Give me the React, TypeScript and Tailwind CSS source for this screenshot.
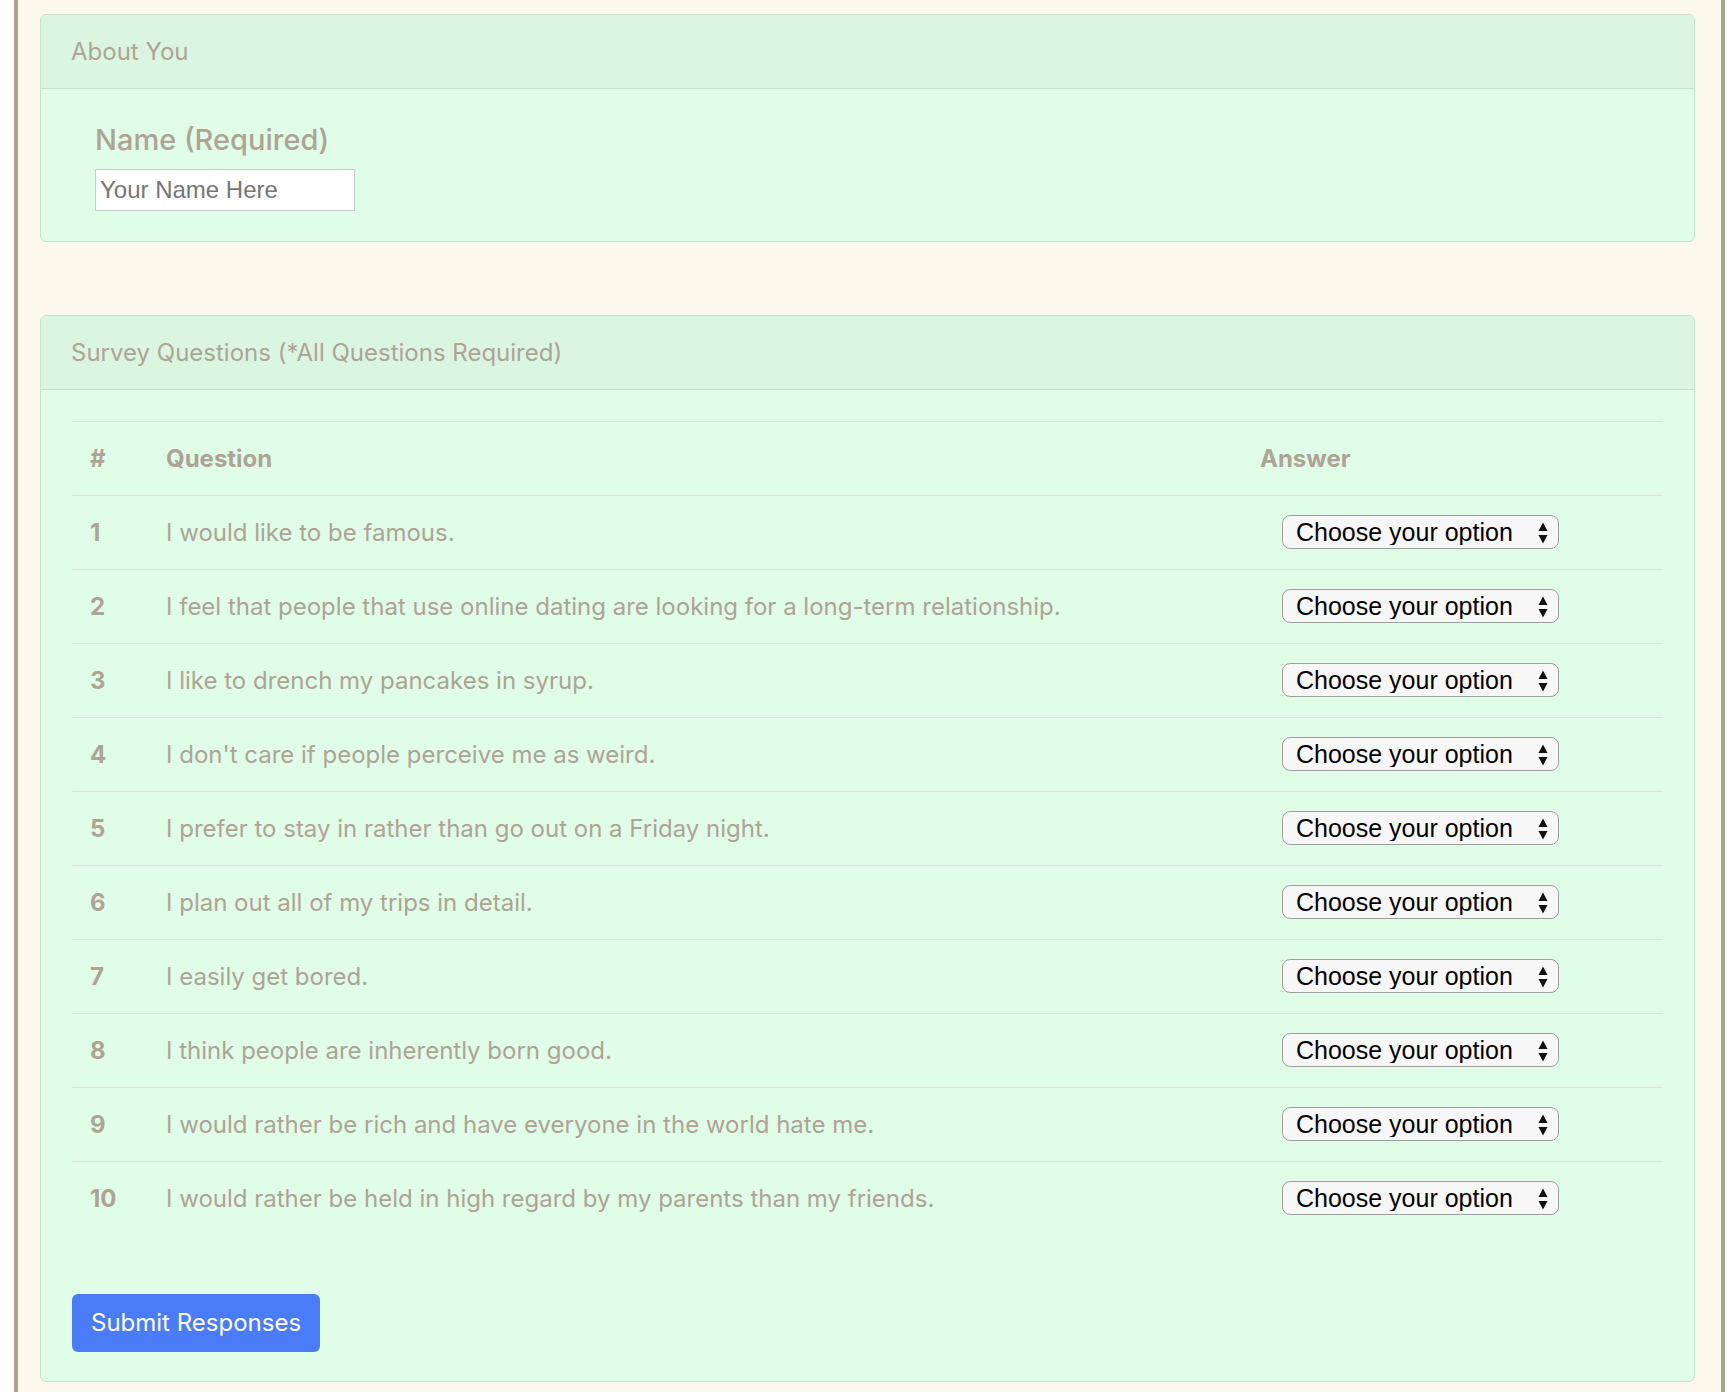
import React from "react";

const questions: string[] = [
  "I would like to be famous.",
  "I feel that people that use online dating are looking for a long-term relationship.",
  "I like to drench my pancakes in syrup.",
  "I don't care if people perceive me as weird.",
  "I prefer to stay in rather than go out on a Friday night.",
  "I plan out all of my trips in detail.",
  "I easily get bored.",
  "I think people are inherently born good.",
  "I would rather be rich and have everyone in the world hate me.",
  "I would rather be held in high regard by my parents than my friends.",
];

const sans = "font-['Inter','Noto_Sans',sans-serif]";

// fake native select, arrows drawn on top
const ChooseSelect: React.FC = () => (
  <div className="relative ml-[22px] inline-block">
    <select
      defaultValue=""
      className="h-[34px] w-[277px] appearance-none rounded-[8px] border-[1.5px] border-[#9e9e9e] bg-[#f7f7f7] pl-[13px] font-['Liberation_Sans',Arial,sans-serif] text-[25px] leading-none text-black outline-none"
    >
      <option value="">Choose your option</option>
      <option value="1">1 (Strongly Disagree)</option>
      <option value="2">2</option>
      <option value="3">3</option>
      <option value="4">4</option>
      <option value="5">5 (Strongly Agree)</option>
    </select>
    <svg
      className="pointer-events-none absolute right-[11px] top-1/2 -translate-y-1/2"
      width="10"
      height="22"
      viewBox="0 0 10 22"
    >
      <polygon points="0.5,9 5,0.5 9.5,9" fill="#111" />
      <polygon points="0.5,13 9.5,13 5,21.5" fill="#111" />
    </svg>
  </div>
);

const Card: React.FC<{ title: string; children: React.ReactNode; className?: string }> = ({
  title,
  children,
  className = "",
}) => (
  <div className={`overflow-hidden rounded-[6px] border border-[#c3e3cc] bg-[#e0fde8] ${className}`}>
    <div className="flex h-[74px] items-center border-b border-[#c3e3cc] bg-[#daf6e1] px-[30px] text-[24px] text-[#aea494]">
      {title}
    </div>
    {children}
  </div>
);

export default function App() {
  return (
    <div className={`min-h-[1392px] bg-white ${sans}`}>
      <div className="ml-[14px] min-h-[1392px] w-[1711px] border-x-4 border-[#aba392] bg-[#fdf8ec] pl-[22px] pr-[26px] pt-[14px] pb-[10px]">
        {/* about you */}
        <Card title="About You">
          <div className="pl-[54px] pt-[33px] pb-[30px]">
            <label className="block text-[29px] font-medium leading-[36px] text-[#aea494]">
              Name (Required)
            </label>
            <input
              type="text"
              placeholder="Your Name Here"
              className="mt-[11px] h-[42px] w-[260px] border border-[#c9c9c9] bg-white px-[4px] font-['Liberation_Sans',Arial,sans-serif] text-[24px] text-[#333] outline-none placeholder:text-[#767676]"
            />
          </div>
        </Card>

        {/* survey */}
        <Card title="Survey Questions (*All Questions Required)" className="mt-[73px]">
          <div className="px-[31px] pt-[31px] pb-[29px]">
            <div className="text-[24px] text-[#aea494]">
              <div className="grid h-[74px] grid-cols-[77px_1fr_421px] items-center border-t border-[#dce2e2] font-bold">
                <div className="pl-[18px]">#</div>
                <div className="pl-[17px]">Question</div>
                <div className="pl-[18px]">Answer</div>
              </div>
              {questions.map((q, i) => (
                <div
                  key={i}
                  className="grid h-[74px] grid-cols-[77px_1fr_421px] items-center border-t border-[#dce2e2]"
                >
                  <div className="pl-[18px] font-bold">{i + 1}</div>
                  <div className="pl-[17px]">{q}</div>
                  <div className="pl-[18px]">
                    <ChooseSelect />
                  </div>
                </div>
              ))}
            </div>
            <button
              type="button"
              className="mt-[59px] h-[58px] rounded-[6px] bg-[#4a7cf7] px-[19px] text-[24px] text-white"
            >
              Submit Responses
            </button>
          </div>
        </Card>
      </div>
    </div>
  );
}
